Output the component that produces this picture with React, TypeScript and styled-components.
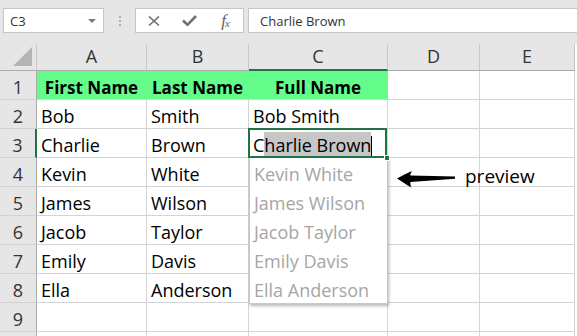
import React from 'react';
import styled, { createGlobalStyle } from 'styled-components';

const Global = createGlobalStyle`
  html, body { margin: 0; padding: 0; background: #fff; }
  body { font-family: "Open Sans", "Liberation Sans", sans-serif; overflow: hidden; }
  * { box-sizing: border-box; }
`;

const Page = styled.div`
  width: 577px;
  height: 336px;
  overflow: hidden;
  background: #fff;
`;

const FormulaBar = styled.div`
  display: flex;
  align-items: stretch;
  height: 44px;
  padding: 8px 0 11px 3px;
  background: #e6e6e6;
`;

const NameBox = styled.div`
  width: 101px;
  background: #fff;
  border: 1px solid #c6c6c6;
  display: flex;
  align-items: center;
  justify-content: space-between;
  padding: 0 7px 0 6px;
  font-size: 13px;
  color: #333;
`;

const DropCaret = styled.span`
  width: 0;
  height: 0;
  border-left: 4px solid transparent;
  border-right: 4px solid transparent;
  border-top: 4px solid #7a7a7a;
`;

const Grip = styled.div`
  width: 31px;
  display: flex;
  flex-direction: column;
  align-items: center;
  justify-content: center;
  gap: 2px;
`;

const GripDot = styled.span`
  width: 2px;
  height: 2px;
  background: #b0b0b0;
`;

const FxButtons = styled.div`
  width: 109px;
  background: #fff;
  border: 1px solid #c6c6c6;
  display: grid;
  grid-template-columns: repeat(3, 1fr);
  align-items: center;
  justify-items: center;
`;

const FxLabel = styled.span`
  font-family: "Liberation Serif", "DejaVu Serif", serif;
  font-style: italic;
  font-size: 17px;
  line-height: 1;
  color: #626262;
  letter-spacing: -1px;
  sub {
    font-size: 11px;
    vertical-align: -1px;
  }
`;

const FormulaInput = styled.div`
  flex: 1;
  margin-left: 4px;
  background: #fff;
  border: 1px solid #c6c6c6;
  border-right: none;
  display: flex;
  align-items: center;
  padding-left: 11px;
  font-size: 13px;
  color: #333;
`;

const SheetWrap = styled.div`
  position: relative;
`;

const Grid = styled.div`
  display: grid;
  grid-template-columns: 37px 110px 102px 139px 92px 95px;
  grid-template-rows: 27px repeat(10, 29px);
`;

const Corner = styled.div`
  background: #e6e6e6;
  border-right: 1px solid #c8c8c8;
  border-bottom: 1px solid #ababab;
  display: flex;
  align-items: flex-end;
  justify-content: flex-end;
  padding: 0 3px 3px 0;
`;

const ColHead = styled.div<{ $active?: boolean }>`
  background: #e6e6e6;
  border-right: 1px solid #c8c8c8;
  border-bottom: ${p => (p.$active ? '2px solid #217346' : '1px solid #ababab')};
  display: flex;
  align-items: center;
  justify-content: center;
  padding-bottom: ${p => (p.$active ? '1px' : '2px')};
  font-size: 18px;
  color: #333;
`;

const RowHead = styled.div<{ $active?: boolean }>`
  background: #e6e6e6;
  border-right: ${p => (p.$active ? '2px solid #217346' : '1px solid #ababab')};
  border-bottom: 1px solid #d2d2d2;
  display: flex;
  align-items: flex-end;
  justify-content: center;
  font-size: 18px;
  color: #333;
`;

const Cell = styled.div<{ $title?: boolean; $selected?: boolean }>`
  position: relative;
  border-right: 1px solid ${p => (p.$title ? '#64fd8b' : '#d4d4d4')};
  border-bottom: 1px solid #d4d4d4;
  background: ${p => (p.$title ? '#64fd8b' : '#fff')};
  display: flex;
  align-items: flex-end;
  justify-content: ${p => (p.$title ? 'center' : 'flex-start')};
  padding: 0 4px;
  font-size: ${p => (p.$title ? '17px' : '18px')};
  font-weight: ${p => (p.$title ? 700 : 400)};
  color: #000;
  white-space: nowrap;
  ${p =>
    p.$selected &&
    `
    z-index: 2;
    &::after {
      content: '';
      position: absolute;
      left: -1px;
      top: -1px;
      right: 0;
      bottom: -1px;
      border: 2px solid #217346;
      pointer-events: none;
    }
  `}
`;

const FillHandle = styled.span`
  position: absolute;
  right: -3px;
  bottom: -4px;
  width: 6px;
  height: 6px;
  background: #217346;
  border: 1px solid #fff;
  z-index: 3;
`;

const Highlight = styled.span`
  background: #c6c6c6;
  padding: 1px 0;
`;

const Cursor = styled.span`
  display: inline-block;
  width: 1px;
  height: 21px;
  background: #000;
  vertical-align: -5px;
`;

const FlashFill = styled.div`
  position: absolute;
  left: 249px;
  top: 113px;
  width: 139px;
  background: #fff;
  border: 1px solid #c8c8c8;
  box-shadow: 1px 2px 3px rgba(0, 0, 0, 0.28);
  z-index: 1;
`;

const FlashItem = styled.div`
  height: 29px;
  display: flex;
  align-items: flex-end;
  padding: 0 4px 1px 4px;
  font-size: 18px;
  color: #a6a6a6;
  white-space: nowrap;
`;

const Annotation = styled.div`
  position: absolute;
  left: 396px;
  top: 119px;
  display: flex;
  align-items: center;
  gap: 7px;
`;

const AnnotationText = styled.span`
  font-size: 19px;
  color: #000;
`;

const ArrowSvg = styled.svg`
  margin-top: 3px;
`;

const cols = ['A', 'B', 'C', 'D', 'E'];

const rows: string[][] = [
  ['First Name', 'Last Name', 'Full Name', '', ''],
  ['Bob', 'Smith', 'Bob Smith', '', ''],
  ['Charlie', 'Brown', '', '', ''],
  ['Kevin', 'White', '', '', ''],
  ['James', 'Wilson', '', '', ''],
  ['Jacob', 'Taylor', '', '', ''],
  ['Emily', 'Davis', '', '', ''],
  ['Ella', 'Anderson', '', '', ''],
  ['', '', '', '', ''],
  ['', '', '', '', ''],
];

const previews = ['Kevin White', 'James Wilson', 'Jacob Taylor', 'Emily Davis', 'Ella Anderson'];

export default function App() {
  return (
    <Page>
      <Global />
      <FormulaBar>
        <NameBox>
          C3
          <DropCaret />
        </NameBox>
        <Grip>
          <GripDot />
          <GripDot />
          <GripDot />
        </Grip>
        <FxButtons>
          <svg width="12" height="10" viewBox="0 0 12 10">
            <path d="M1 0.5 L11 9.5 M11 0.5 L1 9.5" stroke="#707070" strokeWidth="1.6" fill="none" />
          </svg>
          <svg width="15" height="11" viewBox="0 0 15 11">
            <path d="M1 5.5 L5.5 9.8 L14 1" stroke="#707070" strokeWidth="2.6" fill="none" />
          </svg>
          <FxLabel>
            f<sub>x</sub>
          </FxLabel>
        </FxButtons>
        <FormulaInput>Charlie Brown</FormulaInput>
      </FormulaBar>
      <SheetWrap>
        <Grid>
          <Corner>
            <svg width="20" height="20" viewBox="0 0 20 20">
              <path d="M19 0 L19 19 L0 19 Z" fill="#b4b4b4" />
            </svg>
          </Corner>
          {cols.map(c => (
            <ColHead key={c} $active={c === 'C'}>
              {c}
            </ColHead>
          ))}
          {rows.map((r, i) => (
            <React.Fragment key={i}>
              <RowHead $active={i === 2}>{i < 9 ? i + 1 : ''}</RowHead>
              {r.map((v, j) => {
                const title = i === 0 && j < 3;
                if (i === 2 && j === 2) {
                  return (
                    <Cell key={j} $selected>
                      <span>
                        C<Highlight>harlie Brown</Highlight>
                        <Cursor />
                      </span>
                      <FillHandle />
                    </Cell>
                  );
                }
                return (
                  <Cell key={j} $title={title}>
                    {v}
                  </Cell>
                );
              })}
            </React.Fragment>
          ))}
        </Grid>
        <FlashFill>
          {previews.map(p => (
            <FlashItem key={p}>{p}</FlashItem>
          ))}
        </FlashFill>
        <Annotation>
          <ArrowSvg width="62" height="22" viewBox="0 0 62 22">
            <path
              d="M1 11.5 C6 8.5 11 6 16 4 C14.5 6.5 14 8 14.5 8.6 L59 9.6 L59 11.8 L14.5 15 C14 16.5 14.5 18.5 15.5 20.5 C10 17.5 5 14 1 11.5 Z"
              fill="#000"
            />
          </ArrowSvg>
          <AnnotationText>preview</AnnotationText>
        </Annotation>
      </SheetWrap>
    </Page>
  );
}
